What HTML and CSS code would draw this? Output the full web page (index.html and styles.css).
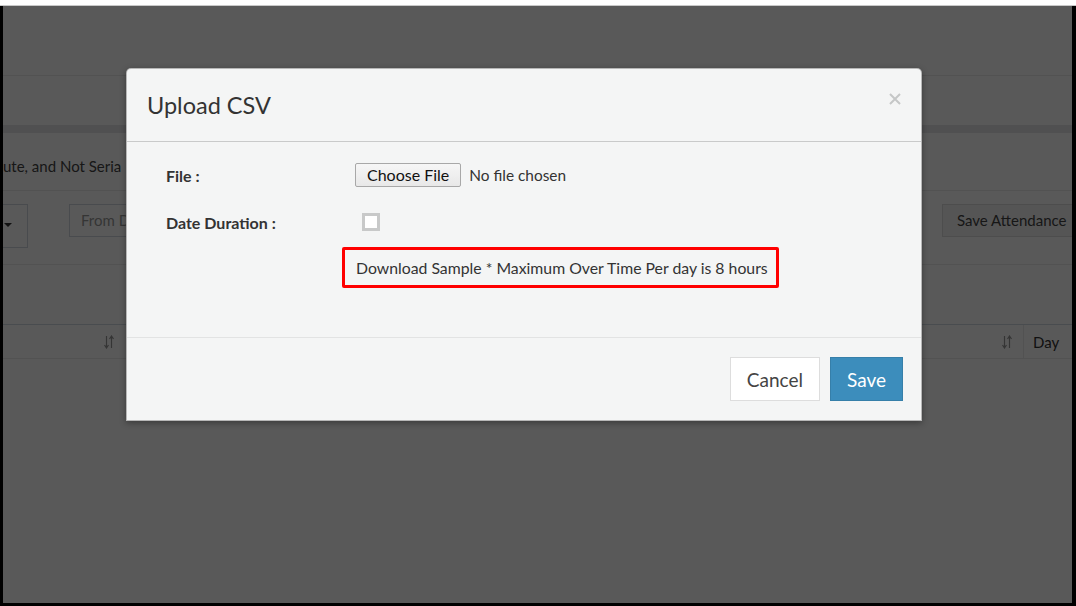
FILE: index.html
```html
<!DOCTYPE html>
<html lang="en">
<head>
  <meta charset="UTF-8">
  <title>Upload CSV</title>
  <link rel="stylesheet" href="styles.css">
</head>
<body>
  <div class="topbar"></div>
  <div class="frame">

    <!-- page behind the dialog -->
    <div class="page">
      <div class="page-head"></div>
      <div class="page-gap"></div>
      <div class="page-band"></div>
      <div class="page-note">ute, and Not Seria</div>
      <div class="page-tools">
        <div class="dropdown"><span class="caret"></span></div>
        <div class="date-input">From Date</div>
        <div class="btn-attendance">Save Attendance</div>
      </div>
      <div class="page-gap2"></div>
      <div class="table-head">
        <div class="th th-first">
          <svg class="sort" width="12" height="14" viewBox="0 0 12 14"><path d="M3.5 1v12M1.5 10l2 3 2-3M8.5 13V1M6.5 4l2-3 2 3" fill="none" stroke="#999" stroke-width="1.2"/></svg>
        </div>
        <div class="th th-mid">
          <svg class="sort" width="12" height="14" viewBox="0 0 12 14"><path d="M3.5 1v12M1.5 10l2 3 2-3M8.5 13V1M6.5 4l2-3 2 3" fill="none" stroke="#999" stroke-width="1.2"/></svg>
        </div>
        <div class="th th-day">Day</div>
      </div>
    </div>

    <!-- modal -->
    <div class="backdrop">
      <div class="modal">
        <div class="modal-header">
          <h4 class="modal-title">Upload CSV</h4>
          <svg class="close" width="12" height="12" viewBox="0 0 12 12"><path d="M1 1l10 10M11 1L1 11" stroke="#c5c7c7" stroke-width="2"/></svg>
        </div>
        <div class="modal-body">
          <div class="form-row">
            <label class="form-label">File :</label>
            <div class="form-value">
              <span class="file-btn">Choose File</span>
              <span class="file-name">No file chosen</span>
            </div>
          </div>
          <div class="form-row">
            <label class="form-label">Date Duration :</label>
            <div class="form-value">
              <span class="checkbox"></span>
            </div>
          </div>
          <div class="notice">Download Sample * Maximum Over Time Per day is 8 hours</div>
        </div>
        <div class="modal-footer">
          <button class="btn btn-default">Cancel</button>
          <button class="btn btn-primary">Save</button>
        </div>
      </div>
    </div>

  </div>
</body>
</html>
```

FILE: styles.css
```css
body {
  margin: 0;
  background: #000;
  font-family: Lato, "Open Sans", sans-serif;
  color: #333;
}

.topbar {
  height: 5px;
  background: #fff;
  border-bottom: 1px solid #c8c8c8;
}

.frame {
  position: relative;
  margin: 0 4px 0 3px;
  height: 597px;
  overflow: hidden;
  background: #fff;
}

/* ---------- page behind ---------- */

.page-head {
  height: 69px;
  border-bottom: 1px solid #ececec;
}

.page-gap {
  height: 49px;
}

.page-band {
  height: 8px;
  background: #e4e6e8;
}

.page-note {
  height: 58px;
  padding-top: 24px;
  box-sizing: border-box;
  font-size: 15px;
  color: #444;
  white-space: nowrap;
  border-bottom: 1px solid #ececec;
}

.page-tools {
  display: flex;
  align-items: flex-start;
  height: 74px;
  padding-top: 13px;
  box-sizing: border-box;
  border-bottom: 1px solid #ececec;
}

.dropdown {
  position: relative;
  margin-left: -40px;
  width: 63px;
  height: 42px;
  border: 1px solid #d2d6de;
  flex-shrink: 0;
}

.caret {
  position: absolute;
  left: 40px;
  top: 18px;
  border-top: 4px solid #333;
  border-left: 4px solid transparent;
  border-right: 4px solid transparent;
}

.date-input {
  margin-left: 41px;
  width: 200px;
  height: 31px;
  line-height: 31px;
  padding-left: 11px;
  border: 1px solid #d2d6de;
  font-size: 15px;
  color: #999;
  flex-shrink: 0;
}

.btn-attendance {
  margin-left: auto;
  margin-right: -16px;
  width: 130px;
  height: 31px;
  line-height: 31px;
  padding-left: 14px;
  border: 1px solid #ddd;
  background: #f4f4f4;
  font-size: 15px;
  color: #444;
  white-space: nowrap;
  flex-shrink: 0;
}

.page-gap2 {
  height: 59px;
}

.table-head {
  display: flex;
  height: 33px;
  border-top: 1px solid #d2dbe3;
  border-bottom: 1px solid #ececec;
  font-size: 15px;
}

.th {
  display: flex;
  align-items: center;
}

.th-first {
  width: 112px;
  justify-content: flex-end;
}

.th-mid {
  flex: 1;
  justify-content: flex-end;
  padding-right: 10px;
  border-right: 1px solid #ececec;
}

.th-day {
  width: 48px;
  box-sizing: border-box;
  padding-left: 9px;
  color: #333;
}

/* ---------- modal ---------- */

.backdrop {
  position: absolute;
  top: 0;
  left: 0;
  right: 0;
  bottom: 0;
  background: rgba(0, 0, 0, 0.65);
}

.modal {
  margin: 62px 0 0 123px;
  width: 796px;
  box-sizing: border-box;
  background: #f4f5f5;
  border: 1px solid rgba(0, 0, 0, 0.25);
  border-radius: 5px 5px 0 0;
  box-shadow: 0 2px 6px rgba(0, 0, 0, 0.35);
}

.modal-header {
  display: flex;
  align-items: center;
  justify-content: space-between;
  height: 72px;
  padding: 0 20px;
  border-bottom: 1px solid #c9caca;
}

.modal-title {
  margin: 0;
  font-size: 23.5px;
  font-weight: normal;
  color: #333;
}

.close {
  margin-bottom: 12px;
}

.modal-body {
  padding: 21px 0 49px 39px;
}

.form-row {
  display: flex;
  align-items: center;
  height: 24px;
  margin-bottom: 23px;
}

.form-label {
  width: 189px;
  font-size: 16px;
  font-weight: bold;
  color: #333;
}

.form-value {
  display: flex;
  align-items: center;
}

.file-btn {
  height: 22px;
  line-height: 22px;
  padding: 0 11px;
  border: 1px solid #a8a8a8;
  border-radius: 2px;
  background: linear-gradient(#f6f6f6, #e8e8e8);
  font-size: 16px;
  color: #111;
}

.file-name {
  margin-left: 8px;
  font-size: 15.4px;
  color: #333;
}

.checkbox {
  margin-left: 7px;
  width: 12px;
  height: 12px;
  border: 3px solid #c8c9c9;
  background: #fff;
}

.notice {
  margin: -10px 0 0 176px;
  width: fit-content;
  height: 35px;
  line-height: 35px;
  padding: 0 8px 0 11px;
  border: 3px solid #f00;
  border-radius: 2px;
  font-size: 15.8px;
  color: #333;
}

.modal-footer {
  display: flex;
  justify-content: flex-end;
  gap: 10px;
  padding: 19px 18px 19px;
  border-top: 1px solid #e2e3e3;
}

.btn {
  height: 44px;
  padding: 0 16px;
  font-family: Lato, "Open Sans", sans-serif;
  font-size: 19px;
  border-radius: 0;
  cursor: pointer;
}

.btn-default {
  background: #fff;
  border: 1px solid #ddd;
  color: #444;
}

.btn-primary {
  background: #3c8dbc;
  border: 1px solid #367fa9;
  color: #fff;
}
```
